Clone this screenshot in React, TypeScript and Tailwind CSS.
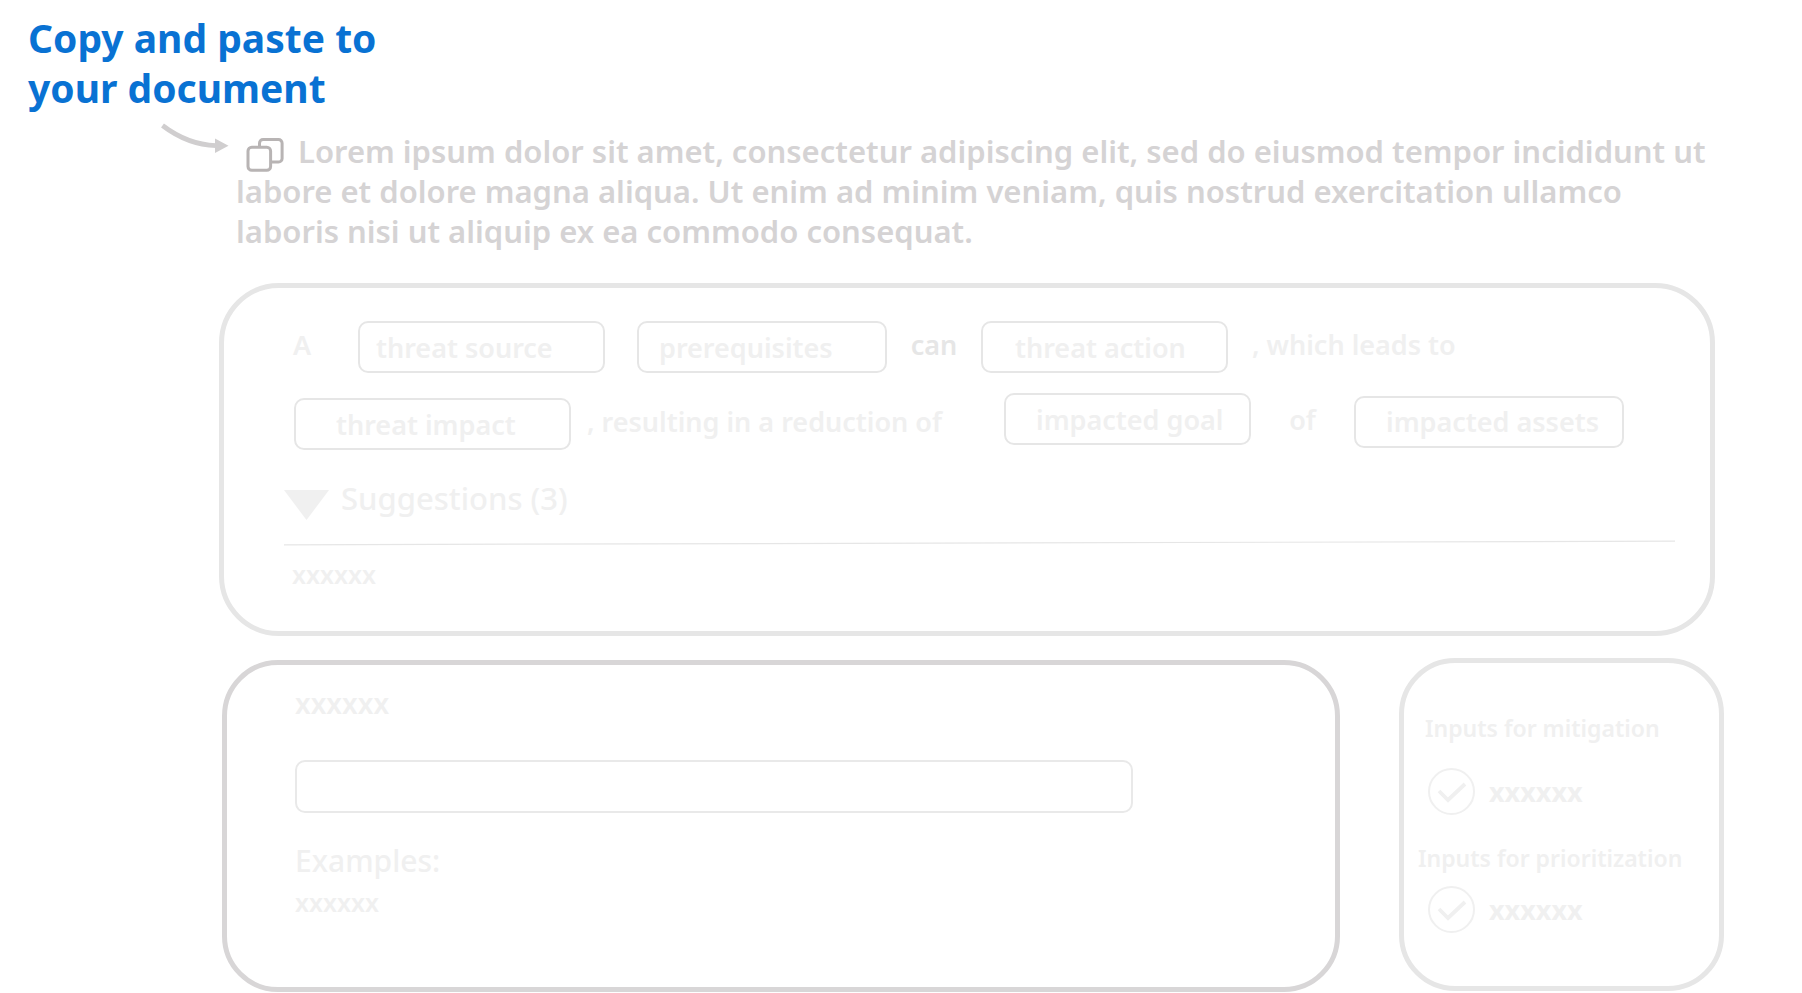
import React from "react";

const inputBase =
  "h-[52px] rounded-[10px] border-2 border-[#e6e6e6] bg-white pr-2 text-[27px] leading-9 font-semibold outline-none placeholder:text-[#f0f0f0] placeholder:opacity-100";

function Token({ name, className }: { name: string; className: string }) {
  return (
    <input type="text" aria-label={name} placeholder={name} className={`${inputBase} ${className}`} />
  );
}

function CopyIcon() {
  return (
    <svg viewBox="0 0 38 34" className="block h-full w-full" fill="none" stroke="#b8b4b4" strokeWidth="3">
      <path d="M13.5 8.5V5.2a3.6 3.6 0 0 1 3.6-3.6h15.4a3.6 3.6 0 0 1 3.6 3.6v15.2a3.6 3.6 0 0 1-3.6 3.6h-6.5" />
      <rect x="2" y="9.2" width="22.6" height="23" rx="3.8" />
    </svg>
  );
}

function Arrow() {
  return (
    <svg viewBox="0 0 70 32" className="mt-[10px] mr-[6px] ml-[160px] h-8 w-[70px] shrink-0" aria-hidden="true">
      <path d="M2.5 2.5C17 13.5 35 22 56 22.6" fill="none" stroke="#d0cecf" strokeWidth="4.8" />
      <path d="M55 15.5l13.5 7.3L55 30z" fill="#d0cecf" />
    </svg>
  );
}

function CheckItem({ id, label }: { id: string; label: string }) {
  return (
    <div className="ml-2.5 flex items-center gap-3.5">
      <span className="grid size-[47px]">
        <input
          id={id}
          type="checkbox"
          defaultChecked
          className="peer col-start-1 row-start-1 size-[47px] appearance-none rounded-full border-2 border-[#f0f0f0] bg-white"
        />
        <svg
          viewBox="0 0 47 47"
          className="pointer-events-none invisible col-start-1 row-start-1 size-[47px] peer-checked:visible"
          fill="none"
          stroke="#f0f0f0"
          strokeWidth="3.8"
        >
          <path d="M11 23l9 9L37 16" />
        </svg>
      </span>
      <label htmlFor={id} className="text-[27px] leading-9 font-bold">
        {label}
      </label>
    </div>
  );
}

export default function App() {
  return (
    <main className="bg-white font-['Noto_Sans',sans-serif] text-[#f0f0f0]">
      <h1 className="w-[400px] pt-[13px] pl-7 text-[39px] leading-[50px] font-bold text-[#0972d3]">
        Copy and paste to
        <br />
        your document
      </h1>

      <section className="flex items-start pr-[87px]">
        <Arrow />
        <p className="mt-[18px] min-w-0 flex-1 text-[31px] leading-10 font-semibold text-[#d5d3d4]">
          <button
            type="button"
            aria-label="Copy"
            className="mr-[14px] -mb-1 ml-[10px] inline-block h-[34px] w-[38px] align-[-9px]"
          >
            <CopyIcon />
          </button>
          Lorem ipsum dolor sit amet, consectetur adipiscing elit, sed do eiusmod tempor incididunt ut
          labore et dolore magna aliqua. Ut enim ad minim veniam, quis nostrud exercitation ullamco
          laboris nisi ut aliquip ex ea commodo consequat.
        </p>
      </section>

      <div className="pr-[78px] pl-[219px]">
        <section className="mt-8 mr-[9px] rounded-[60px] border-5 border-[#e6e6e6] pt-[33px] pr-[35px] pb-[39px] pl-[60px]">
          <div className="ml-[9px] flex flex-wrap items-center text-[27px] leading-9 font-semibold">
            <span className="w-[65px] pb-1">A</span>
            <Token name="threat source" className="w-[247px] pl-4" />
            <Token name="prerequisites" className="ml-8 w-[250px] pl-5" />
            <span className="w-[94px] pb-1 text-center text-[#e6e6e6]">can</span>
            <Token name="threat action" className="w-[247px] pl-8" />
            <span className="pb-1 pl-6">, which leads to</span>
          </div>

          <div className="mt-5 ml-[10px] flex min-h-[57px] flex-wrap items-center text-[27px] leading-9 font-semibold">
            <Token name="threat impact" className="w-[277px] self-end pl-10" />
            <span className="w-[433px] pl-4">, resulting in a reduction of</span>
            <Token name="impacted goal" className="w-[247px] self-start pl-[30px]" />
            <span className="w-[103px] pb-1 text-center">of</span>
            <Token name="impacted assets" className="w-[270px] pl-[30px]" />
          </div>

          <button type="button" aria-expanded="true" className="mt-7 flex h-[42px] items-start gap-3">
            <svg viewBox="0 0 45 30" className="h-[30px] w-[45px] self-end" fill="#f0f0f0">
              <path d="M0 0h45L22.5 30z" />
            </svg>
            <span className="text-[31px] leading-10 font-medium">Suggestions (3)</span>
          </button>

          <svg viewBox="0 0 1391 6" preserveAspectRatio="none" className="mt-5 block h-1.5 w-full" aria-hidden="true">
            <path d="M0 4.8L1391 1.2" stroke="#e6e6e6" strokeWidth="1.2" />
          </svg>
          <p className="mt-2.5 ml-2 text-[25px] leading-9 font-semibold">xxxxxx</p>
        </section>

        <div className="mt-[22px] ml-[3px] flex items-start gap-[59px]">
          <section className="mt-0.5 min-w-0 flex-1 rounded-[56px] border-5 border-[#d8d6d7] px-[68px] pt-[18px] pb-[67px]">
            <label htmlFor="entry" className="block text-[28px] leading-10 font-semibold">
              xxxxxx
            </label>
            <input
              id="entry"
              type="text"
              className="mt-[37px] block h-[53px] w-full max-w-[838px] rounded-[10px] border-2 border-[#e9e9e9] bg-white px-4 text-[27px] text-[#d5d3d4] outline-none"
            />
            <h2 className="mt-7 text-[30px] leading-10 font-medium">Examples:</h2>
            <p className="mt-[3px] text-[25px] leading-9 font-semibold">xxxxxx</p>
          </section>

          <aside className="w-[325px] shrink-0 rounded-[56px] border-5 border-[#e6e6e6] pt-[49px] pb-[53px] pl-[14px]">
            <h2 className="mb-6 ml-[7px] text-[23px] leading-8 font-semibold">Inputs for mitigation</h2>
            <CheckItem id="mitigation" label="xxxxxx" />
            <h2 className="mt-[27px] mb-3 text-[23px] leading-8 font-semibold">Inputs for prioritization</h2>
            <CheckItem id="prioritization" label="xxxxxx" />
          </aside>
        </div>
      </div>
    </main>
  );
}
